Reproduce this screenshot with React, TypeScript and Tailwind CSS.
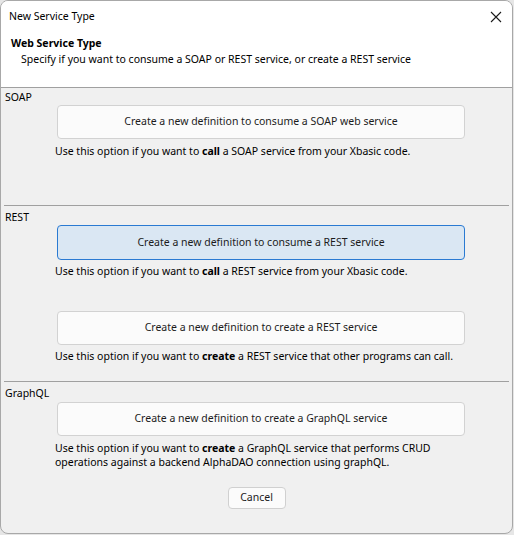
import React from 'react';

const FONT = { fontFamily: '"Noto Sans", "Open Sans", sans-serif' };

function OptionButton({ label, active }: { label: string; active?: boolean }) {
  return (
    <button
      type="button"
      className={
        'ml-[56px] flex w-[408px] items-center justify-center rounded-[4px] border text-[10.5px] text-[#1b1b1b] ' +
        (active
          ? 'h-[35px] border-[#2a7ad2] bg-[#dae7f3]'
          : 'h-[34px] border-[#d2d2d2] bg-[#fbfbfb]')
      }
    >
      {label}
    </button>
  );
}

function Section({ title }: { title: string }) {
  return <div className="pl-[4px] text-[10.5px] leading-[16px] text-black">{title}</div>;
}

function Desc({ children, className = '' }: { children: React.ReactNode; className?: string }) {
  return (
    <p className={'ml-[54px] text-[10.5px] leading-[16px] text-black ' + className}>{children}</p>
  );
}

export default function App() {
  return (
    <div className="h-[535px] w-[514px] bg-[#e6e6e6]" style={FONT}>
      <div className="flex h-[534px] w-[513px] flex-col overflow-hidden rounded-[8px] border border-[#a8a8a8] bg-[#f0f0f0]">
        {/* title bar + header */}
        <div className="h-[87px] border-b border-[#a0a0a0] bg-white">
          <div className="flex h-[32px] items-center justify-between pl-[8px] pr-[10px]">
            <span className="text-[10.5px] text-black">New Service Type</span>
            <svg width="12" height="12" viewBox="0 0 12 12">
              <path d="M1 1L11 11M11 1L1 11" stroke="#1a1a1a" strokeWidth="1.1" />
            </svg>
          </div>
          <div className="pl-[10px] pt-[2px] text-[10.5px] font-bold leading-[16px] text-black">
            Web Service Type
          </div>
          <div className="pl-[20px] text-[10.5px] leading-[16px] text-black">
            Specify if you want to consume a SOAP or REST service, or create a REST service
          </div>
        </div>

        {/* body */}
        <div className="flex flex-1 flex-col">
          <div className="mt-[1px]">
            <Section title="SOAP" />
          </div>
          <OptionButton label="Create a new definition to consume a SOAP web service" />
          <Desc className="mt-[4px]">
            Use this option if you want to <b>call</b> a SOAP service from your Xbasic code.
          </Desc>

          <div className="ml-[3px] mr-[3px] mt-[46px] h-px bg-[#a0a0a0]" />

          <div className="mt-[3px]">
            <Section title="REST" />
          </div>
          <OptionButton label="Create a new definition to consume a REST service" active />
          <Desc className="mt-[3px]">
            Use this option if you want to <b>call</b> a REST service from your Xbasic code.
          </Desc>

          <div className="mt-[32px]">
            <OptionButton label="Create a new definition to create a REST service" />
          </div>
          <Desc className="mt-[3px]">
            Use this option if you want to <b>create</b> a REST service that other programs can
            call.
          </Desc>

          <div className="ml-[3px] mr-[3px] mt-[17px] h-px bg-[#a0a0a0]" />

          <div className="mt-[3px]">
            <Section title="GraphQL" />
          </div>
          <div className="mt-[1px]">
            <OptionButton label="Create a new definition to create a GraphQL service" />
          </div>
          <p className="ml-[54px] mt-[5px] text-[10.5px] leading-[14px] text-black">
            Use this option if you want to <b>create</b> a GraphQL service that performs CRUD
            <br />
            operations against a backend AlphaDAO connection using graphQL.
          </p>

          <div className="mt-[18px] flex justify-center">
            <button
              type="button"
              className="h-[22px] w-[58px] rounded-[4px] border border-[#d0d0d0] bg-[#fbfbfb] text-[10.5px] text-[#1b1b1b]"
            >
              Cancel
            </button>
          </div>
        </div>
      </div>
    </div>
  );
}
